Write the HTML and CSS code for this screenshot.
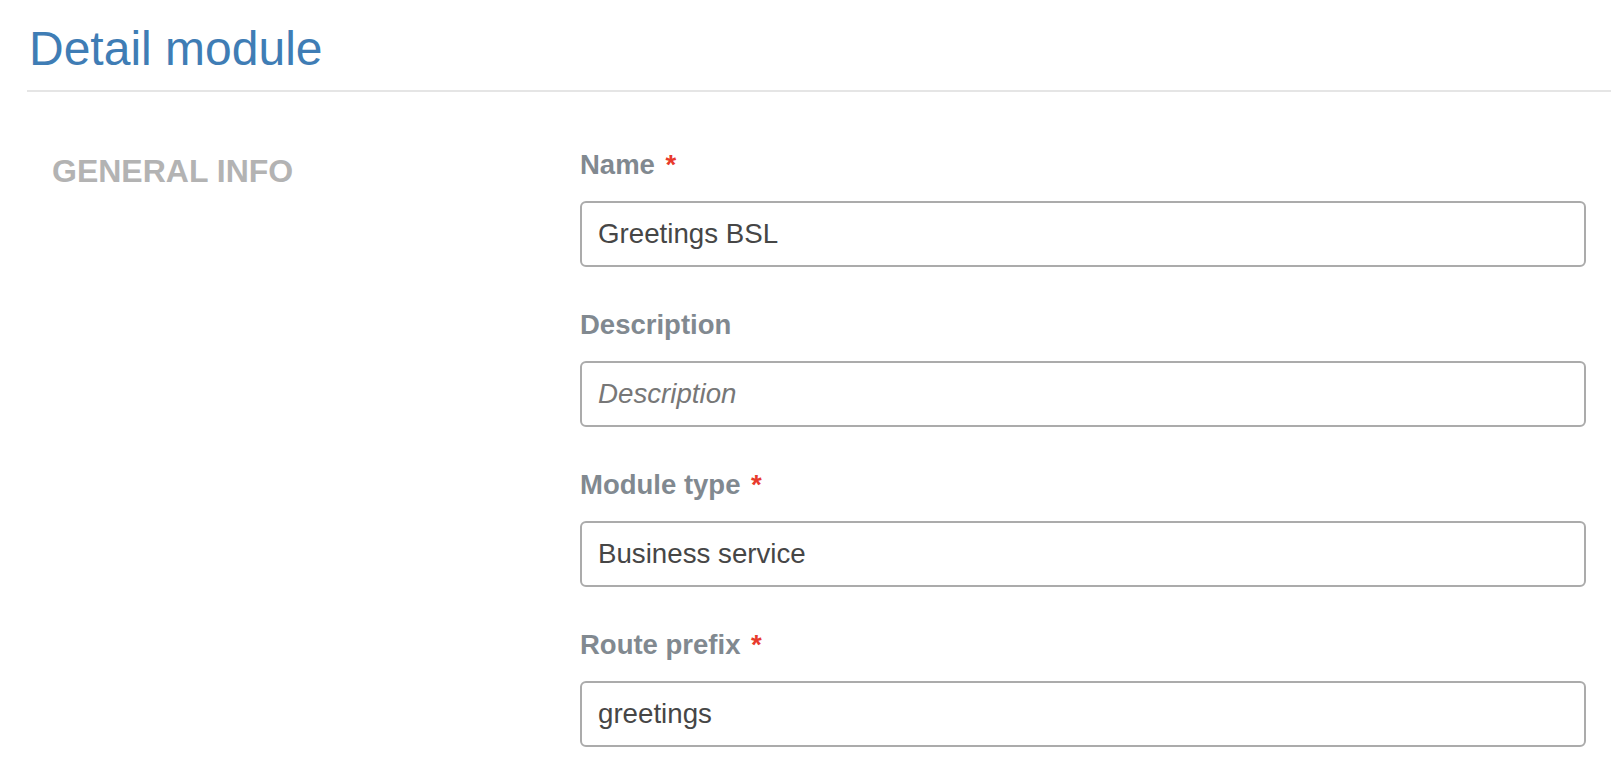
FILE: index.html
```html
<!DOCTYPE html>
<html lang="en">
<head>
<meta charset="utf-8">
<title>Detail module</title>
<link rel="stylesheet" href="styles.css">
</head>
<body>
<div class="page">
  <h1 class="page-title">Detail module</h1>
  <section class="form-section">
    <div class="section-label">GENERAL INFO</div>
    <div class="fields">
      <div class="field">
        <label class="field-label">Name <span class="req">*</span></label>
        <input class="field-input" type="text" value="Greetings BSL">
      </div>
      <div class="field">
        <label class="field-label">Description</label>
        <input class="field-input" type="text" placeholder="Description">
      </div>
      <div class="field">
        <label class="field-label">Module type <span class="req">*</span></label>
        <input class="field-input" type="text" value="Business service">
      </div>
      <div class="field">
        <label class="field-label">Route prefix <span class="req">*</span></label>
        <input class="field-input" type="text" value="greetings">
      </div>
    </div>
  </section>
</div>
</body>
</html>
```

FILE: styles.css
```css
html, body {
  margin: 0;
  padding: 0;
  background: #ffffff;
  overflow: hidden;
}

body {
  font-family: "Liberation Sans", Arial, sans-serif;
}

.page {
  padding: 0 11px 0 27px;
}

.page-title {
  margin: 0;
  padding: 21px 0 13px 2px;
  font-size: 48px;
  line-height: 56px;
  font-weight: normal;
  color: #3f7db5;
  border-bottom: 2px solid #e5e5e5;
}

.form-section {
  display: flex;
  padding: 57px 25px 0 25px;
}

.section-label {
  width: 528px;
  flex: none;
  padding-top: 6px;
  font-size: 32px;
  line-height: 32px;
  font-weight: bold;
  color: #b3b3b3;
}

.fields {
  flex: 1;
  display: flex;
  flex-direction: column;
  gap: 42px;
}

.field {
  display: flex;
  flex-direction: column;
  gap: 20px;
}

.field-label {
  font-size: 27.5px;
  line-height: 32px;
  font-weight: bold;
  color: #818990;
}

.req {
  color: #e83a2c;
  font-weight: bold;
  margin-left: 3px;
}

.field-input {
  box-sizing: border-box;
  width: 100%;
  height: 66px;
  margin: 0;
  padding: 0 16px;
  border: 2px solid #ababab;
  border-radius: 6px;
  font-family: "Liberation Sans", Arial, sans-serif;
  font-size: 27.7px;
  color: #464646;
  background: #ffffff;
  outline: none;
}

.field-input::placeholder {
  color: #777777;
  font-style: italic;
  opacity: 1;
}
```
